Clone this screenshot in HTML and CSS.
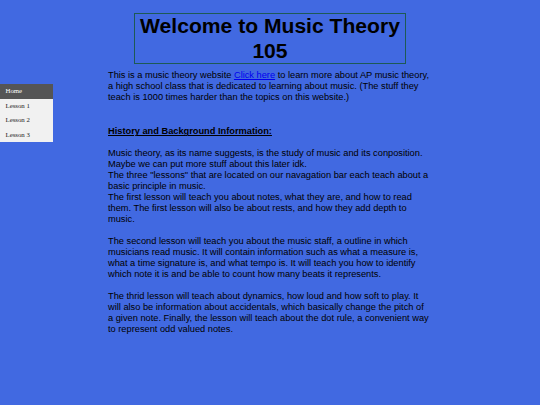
FILE: index.html
```html
<!DOCTYPE html>
<html>
<head>
<meta charset="utf-8">
<title>Music Theory 105</title>
<link rel="stylesheet" href="styles.css">
</head>
<body>
<div class="page">
  <nav class="sidenav">
    <a class="nav-item active" href="#">Home</a>
    <a class="nav-item" href="#">Lesson 1</a>
    <a class="nav-item" href="#">Lesson 2</a>
    <a class="nav-item" href="#">Lesson 3</a>
  </nav>
  <main class="content">
    <h1 class="title">Welcome to Music Theory 105</h1>
    <p class="intro">This is a music theory website <a class="link" href="#">Click here</a> to learn more about AP music theory, a high school class that is dedicated to learning about music. (The stuff they teach is 1000 times harder than the topics on this website.)</p>
    <h2 class="section-title">History and Background Information:</h2>
    <p class="body">Music theory, as its name suggests, is the study of music and its conposition. Maybe we can put more stuff about this later idk.<br>The three "lessons" that are located on our navagation bar each teach about a basic principle in music.<br>The first lesson will teach you about notes, what they are, and how to read them. The first lesson will also be about rests, and how they add depth to music.</p>
    <p class="body">The second lesson will teach you about the music staff, a outline in which musicians read music. It will contain information such as what a measure is, what a time signature is, and what tempo is. It will teach you how to identify which note it is and be able to count how many beats it represents.</p>
    <p class="body">The thrid lesson will teach about dynamics, how loud and how soft to play. It will also be information about accidentals, which basically change the pitch of a given note. Finally, the lesson will teach about the dot rule, a convenient way to represent odd valued notes.</p>
  </main>
</div>
</body>
</html>
```

FILE: styles.css
```css
html, body {
  margin: 0;
  padding: 0;
  background: #4169e1;
}

.page {
  display: grid;
  grid-template-columns: 108px 322px 1fr;
  align-items: start;
}

.sidenav {
  margin-top: 84px;
  width: 53px;
  background: #f1f1f1;
  display: flex;
  flex-direction: column;
}

.nav-item {
  display: block;
  font-family: "Liberation Serif", "Times New Roman", serif;
  font-size: 6.8px;
  line-height: 14.5px;
  padding: 0 0 0 5.5px;
  color: #222;
  text-decoration: none;
}

.nav-item.active {
  background: #555;
  color: #fff;
}

.content {
  font-family: "Liberation Sans", Arial, sans-serif;
  font-size: 9.25px;
  line-height: 11px;
  color: #000;
}

.title {
  width: 270px;
  margin: 13px 0 0 26px;
  border: 1px solid #1d5a55;
  font-size: 21.1px;
  font-weight: bold;
  line-height: 24.7px;
  text-align: center;
}

.intro {
  margin: 5.6px 0 0;
}

.link {
  color: #0000ee;
  text-decoration: underline;
}

.section-title {
  margin: 23.4px 0 0;
  font-size: 9.25px;
  line-height: 11px;
  font-weight: bold;
  text-decoration: underline;
}

.body {
  margin: 11px 0 0;
}
```
